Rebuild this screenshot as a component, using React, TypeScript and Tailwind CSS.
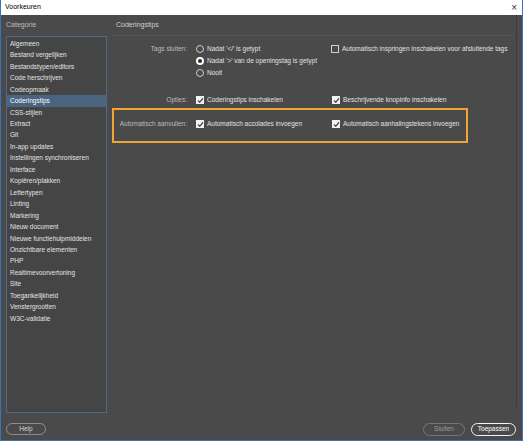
const categories = [
  "Algemeen",
  "Bestand vergelijken",
  "Bestandstypen/editors",
  "Code herschrijven",
  "Codeopmaak",
  "Coderingstips",
  "CSS-stijlen",
  "Extract",
  "Git",
  "In-app updates",
  "Instellingen synchroniseren",
  "Interface",
  "Kopiëren/plakken",
  "Lettertypen",
  "Linting",
  "Markering",
  "Nieuw document",
  "Nieuwe functiehulpmiddelen",
  "Onzichtbare elementen",
  "PHP",
  "Realtimevoorvertoning",
  "Site",
  "Toegankelijkheid",
  "Venstergrootten",
  "W3C-validatie",
];

function Radio({ checked, label }: { checked?: boolean; label: string }) {
  return (
    <div className="flex items-center gap-[3px] h-[12px]">
      <span
        className={`w-[8px] h-[8px] rounded-full shrink-0 ${
          checked ? "border-[2.5px] border-white bg-[#2a2a2a]" : "border border-[#d0d0d0]"
        }`}
      />
      <span className="text-[#e2e2e2]">{label}</span>
    </div>
  );
}

function Check({ checked, label }: { checked?: boolean; label: string }) {
  return (
    <div className="flex items-center gap-[3px] h-[12px]">
      {checked ? (
        <span className="w-[8px] h-[8px] bg-[#f2f2f2] shrink-0 flex items-center justify-center">
          <svg viewBox="0 0 8 8" className="w-[7px] h-[7px]">
            <path d="M1.2 4.2 L3.1 6 L6.8 1.6" fill="none" stroke="#2b2b2b" strokeWidth="1.3" />
          </svg>
        </span>
      ) : (
        <span className="w-[8px] h-[8px] border border-[#d0d0d0] shrink-0" />
      )}
      <span className="text-[#e2e2e2] whitespace-nowrap">{label}</span>
    </div>
  );
}

export default function App() {
  return (
    <div
      className="w-[523px] h-[441px] flex flex-col border border-t-0 border-[#3b74b4] bg-[#4a4a4a] text-[6.5px] overflow-hidden"
      style={{ fontFamily: '"Liberation Sans", Arial, sans-serif' }}
    >
      {/* Title bar */}
      <div className="h-[15px] bg-white flex items-center justify-between pl-[4px] pr-[5px] text-black shrink-0">
        <span className="text-[7px]">Voorkeuren</span>
        <span className="text-[10px] leading-none text-[#333]">×</span>
      </div>

      <div className="flex-1 flex px-[5px] gap-[5px] min-h-0">
        {/* Categories */}
        <div className="w-[101px] flex flex-col">
          <div className="h-[21px] flex items-center text-[#bdbdbd] text-[7px]">Categorie</div>
          <div className="flex-1 border border-[#50698a] bg-[#454545] pt-[1px]">
            {categories.map((c) => (
              <div
                key={c}
                className={`h-[11.46px] flex items-center pl-[3px] ${
                  c === "Coderingstips" ? "bg-[#4b6480] text-white" : "text-[#e4e4e4]"
                }`}
              >
                {c}
              </div>
            ))}
          </div>
        </div>

        {/* Settings panel */}
        <div className="flex-1 flex flex-col border-r border-[#3c3c3c] pr-[2px] mb-[6px]">
          <div className="h-[21px] flex items-center pl-[4px] text-[#cfcfcf] text-[7px] border-b border-[#555555]">
            Coderingstips
          </div>

          <div className="pt-[7px]">
            <div className="flex">
              <div className="w-[75px] h-[12px] flex items-center justify-end text-[#bdbdbd]">Tags sluiten:</div>
              <div className="w-[135px] ml-[9px] flex flex-col">
                <Radio label="Nadat '</' is getypt" />
                <Radio checked label="Nadat '>' van de openingstag is getypt" />
                <Radio label="Nooit" />
              </div>
              <div>
                <Check label="Automatisch inspringen inschakelen voor afsluitende tags" />
              </div>
            </div>

            <div className="flex mt-[15px]">
              <div className="w-[75px] h-[12px] flex items-center justify-end text-[#bdbdbd]">Opties:</div>
              <div className="w-[136px] ml-[9px]">
                <Check checked label="Coderingstips inschakelen" />
              </div>
              <Check checked label="Beschrijvende knopinfo inschakelen" />
            </div>

            <div className="w-[356px] mt-[2px] border-2 border-[#f0a534] pt-[8px] pb-[11px]">
              <div className="flex -ml-[2px]">
                <div className="w-[75px] h-[12px] flex items-center justify-end text-[#bdbdbd]">Automatisch aanvullen:</div>
                <div className="w-[136px] ml-[9px]">
                  <Check checked label="Automatisch accolades invoegen" />
                </div>
                <Check checked label="Automatisch aanhalingstekens invoegen" />
              </div>
            </div>
          </div>
        </div>
      </div>

      {/* Footer */}
      <div className="h-[27px] flex items-start justify-between px-[5px] pt-[10px] shrink-0">
        <button className="w-[40px] h-[12px] rounded-full border border-[#8d8d8d] text-[#d6d6d6] text-[6.5px] leading-none">
          Help
        </button>
        <div className="flex gap-[6px] mr-[1px]">
          <button className="w-[42px] h-[13px] rounded-full border border-[#777777] text-[#9c9c9c] text-[6.5px] leading-none">
            Sluiten
          </button>
          <button className="w-[45px] h-[13px] rounded-full border-[1.5px] border-[#f4f4f4] text-white text-[6.5px] leading-none">
            Toepassen
          </button>
        </div>
      </div>
    </div>
  );
}
